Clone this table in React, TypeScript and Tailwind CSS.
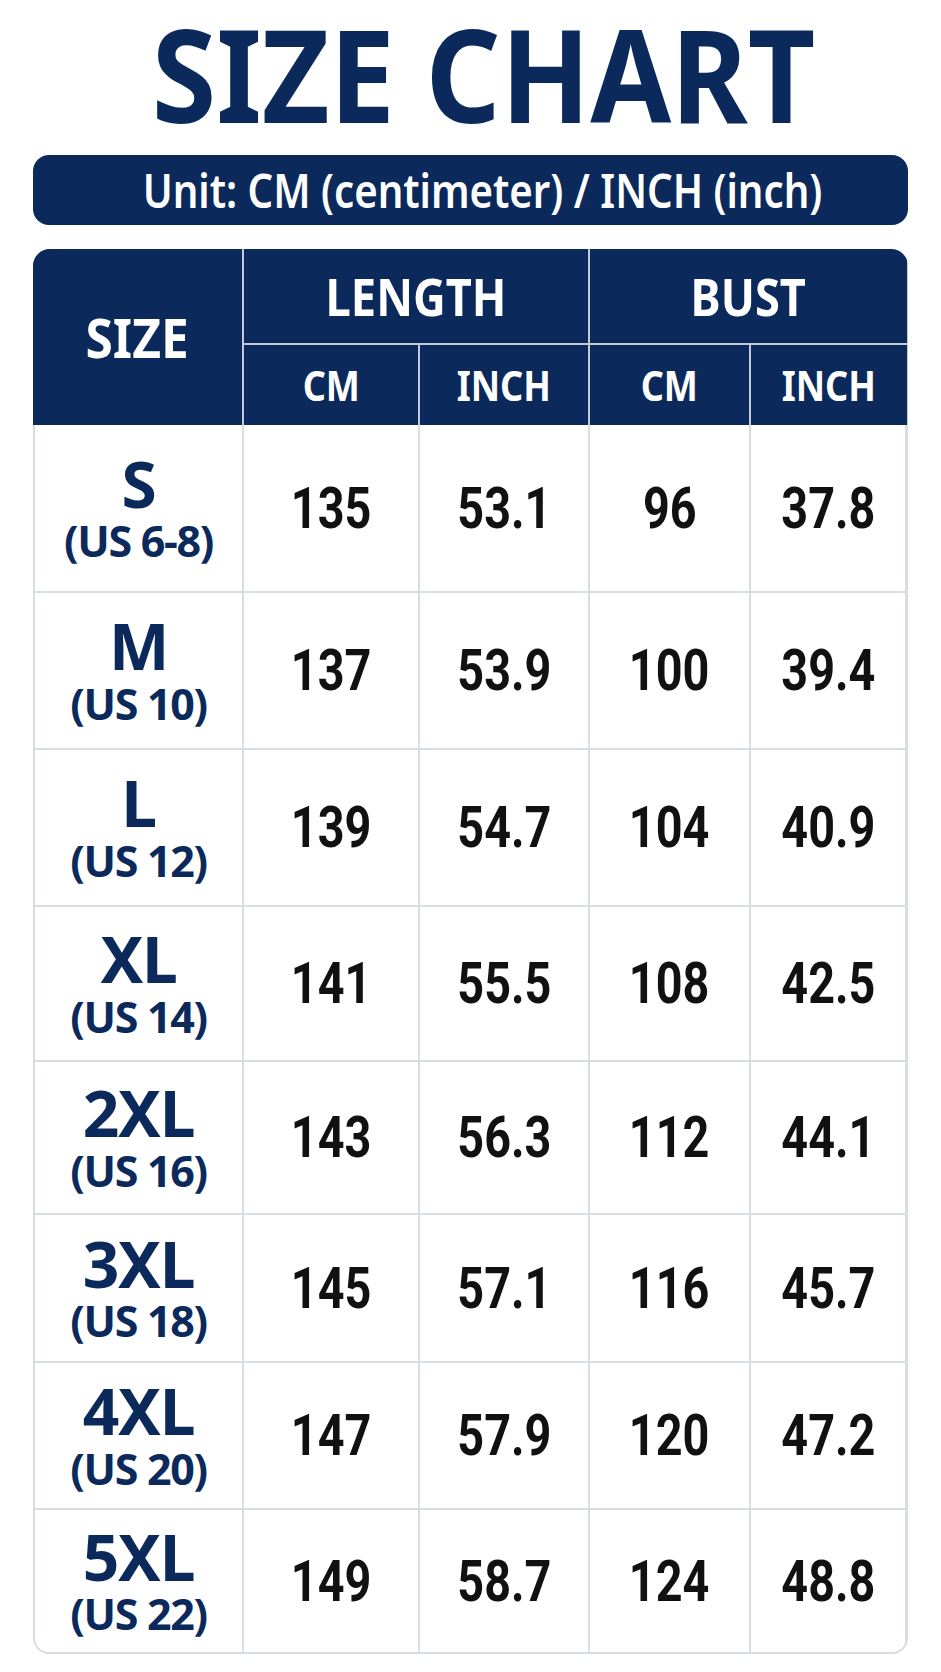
const rows = [
	{ size: "S", us: "(US 6-8)", length: ["135", "53.1"], bust: ["96", "37.8"] },
	{ size: "M", us: "(US 10)", length: ["137", "53.9"], bust: ["100", "39.4"] },
	{ size: "L", us: "(US 12)", length: ["139", "54.7"], bust: ["104", "40.9"] },
	{ size: "XL", us: "(US 14)", length: ["141", "55.5"], bust: ["108", "42.5"] },
	{ size: "2XL", us: "(US 16)", length: ["143", "56.3"], bust: ["112", "44.1"] },
	{ size: "3XL", us: "(US 18)", length: ["145", "57.1"], bust: ["116", "45.7"] },
	{ size: "4XL", us: "(US 20)", length: ["147", "57.9"], bust: ["120", "47.2"] },
	{ size: "5XL", us: "(US 22)", length: ["149", "58.7"], bust: ["124", "48.8"] },
];

const head = "flex items-center justify-center bg-[#0b2a5b] font-bold text-white leading-none";

export default function App() {
	return (
		<div className="min-h-[1672px] bg-white px-[33px] font-['Noto_Sans',sans-serif]">
			<h1 className="flex justify-center pt-[8px] pl-[26px] text-[130px] leading-none font-bold text-[#0b2a5b]">
				<span className="inline-block scale-x-[0.9]">SIZE CHART</span>
			</h1>

			<div className="mt-[17px] flex h-[70px] items-center justify-center rounded-[16px] bg-[#0b2a5b] pl-[24px] text-[47px] leading-none font-semibold text-white">
				<span className="inline-block scale-x-[0.855]">Unit: CM (centimeter) / INCH (inch)</span>
			</div>

			<div className="mt-[24px]">
				<div className="overflow-hidden rounded-t-[17px] bg-[#c3c9d5]">
					<div className="grid grid-cols-[209px_174px_168px_159px_156px] grid-rows-[94px_80px] gap-[2px]">
						<div className={`${head} row-span-2 text-[54px]`}>
							<span className="inline-block scale-x-[0.92]">SIZE</span>
						</div>
						<div className={`${head} col-span-2 text-[52px]`}>
							<span className="inline-block scale-x-[0.87]">LENGTH</span>
						</div>
						<div className={`${head} col-span-2 text-[52px]`}>
							<span className="inline-block scale-x-[0.87]">BUST</span>
						</div>
						{["CM", "INCH", "CM", "INCH"].map((u, i) => (
							<div key={i} className={`${head} text-[42px]`}>
								<span className="inline-block scale-x-[0.86]">{u}</span>
							</div>
						))}
					</div>
				</div>

				<div className="overflow-hidden rounded-b-[16px] border-x-2 border-b-2 border-[#d8dce4] bg-[#d8dce4]">
					<div className="grid grid-cols-[207px_174px_168px_159px_154px] grid-rows-[166px_155px_155px_153px_151px_146px_145px_142px] gap-[2px]">
						{rows.map((r) => [
							<div key={r.size} className="flex flex-col items-center justify-center bg-white text-[#0b2a5b]">
								<span className="text-[64px] leading-[0.9] font-bold tracking-[-0.02em]">{r.size}</span>
								<span className="mt-[10px] text-[43px] leading-[0.9] font-bold tracking-[-0.03em]">{r.us}</span>
							</div>,
							...[...r.length, ...r.bust].map((v, i) => (
								<div
									key={r.size + i}
									className="flex items-center justify-center bg-white font-['Roboto',sans-serif] text-[57px] leading-none font-bold text-[#111111]"
								>
									<span className="inline-block scale-x-[0.82]">{v}</span>
								</div>
							)),
						])}
					</div>
				</div>
			</div>
		</div>
	);
}
